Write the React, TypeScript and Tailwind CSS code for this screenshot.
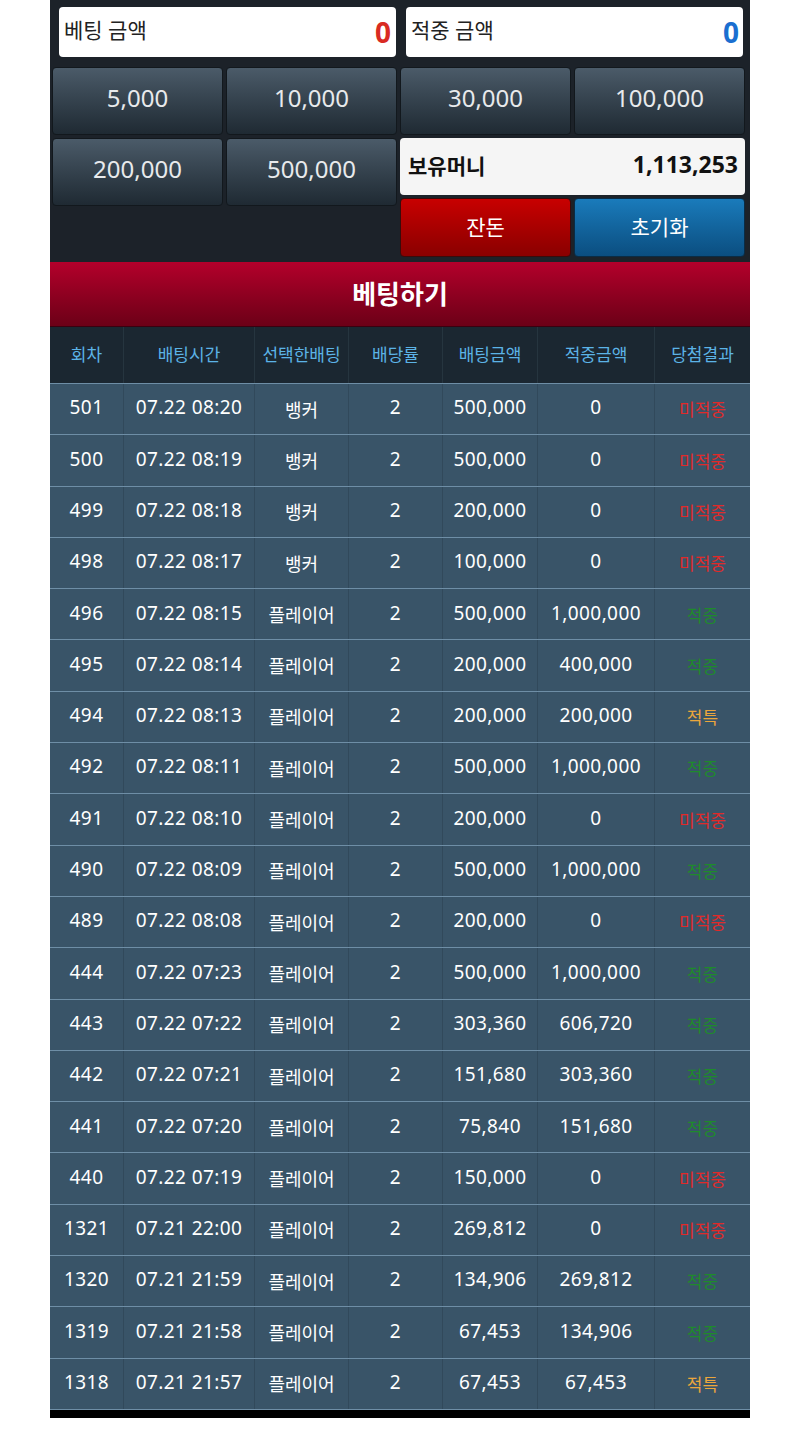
import React from 'react';

type Result = '미적중' | '적중' | '적특';

type Bet = {
    round: string;
    time: string;
    pick: string;
    odds: string;
    amount: string;
    win: string;
    result: Result;
};

const bets: Bet[] = [
    { round: '501', time: '07.22 08:20', pick: '뱅커', odds: '2', amount: '500,000', win: '0', result: '미적중' },
    { round: '500', time: '07.22 08:19', pick: '뱅커', odds: '2', amount: '500,000', win: '0', result: '미적중' },
    { round: '499', time: '07.22 08:18', pick: '뱅커', odds: '2', amount: '200,000', win: '0', result: '미적중' },
    { round: '498', time: '07.22 08:17', pick: '뱅커', odds: '2', amount: '100,000', win: '0', result: '미적중' },
    { round: '496', time: '07.22 08:15', pick: '플레이어', odds: '2', amount: '500,000', win: '1,000,000', result: '적중' },
    { round: '495', time: '07.22 08:14', pick: '플레이어', odds: '2', amount: '200,000', win: '400,000', result: '적중' },
    { round: '494', time: '07.22 08:13', pick: '플레이어', odds: '2', amount: '200,000', win: '200,000', result: '적특' },
    { round: '492', time: '07.22 08:11', pick: '플레이어', odds: '2', amount: '500,000', win: '1,000,000', result: '적중' },
    { round: '491', time: '07.22 08:10', pick: '플레이어', odds: '2', amount: '200,000', win: '0', result: '미적중' },
    { round: '490', time: '07.22 08:09', pick: '플레이어', odds: '2', amount: '500,000', win: '1,000,000', result: '적중' },
    { round: '489', time: '07.22 08:08', pick: '플레이어', odds: '2', amount: '200,000', win: '0', result: '미적중' },
    { round: '444', time: '07.22 07:23', pick: '플레이어', odds: '2', amount: '500,000', win: '1,000,000', result: '적중' },
    { round: '443', time: '07.22 07:22', pick: '플레이어', odds: '2', amount: '303,360', win: '606,720', result: '적중' },
    { round: '442', time: '07.22 07:21', pick: '플레이어', odds: '2', amount: '151,680', win: '303,360', result: '적중' },
    { round: '441', time: '07.22 07:20', pick: '플레이어', odds: '2', amount: '75,840', win: '151,680', result: '적중' },
    { round: '440', time: '07.22 07:19', pick: '플레이어', odds: '2', amount: '150,000', win: '0', result: '미적중' },
    { round: '1321', time: '07.21 22:00', pick: '플레이어', odds: '2', amount: '269,812', win: '0', result: '미적중' },
    { round: '1320', time: '07.21 21:59', pick: '플레이어', odds: '2', amount: '134,906', win: '269,812', result: '적중' },
    { round: '1319', time: '07.21 21:58', pick: '플레이어', odds: '2', amount: '67,453', win: '134,906', result: '적중' },
    { round: '1318', time: '07.21 21:57', pick: '플레이어', odds: '2', amount: '67,453', win: '67,453', result: '적특' },
];

const resultColor: Record<Result, string> = {
    미적중: 'text-[#e02a2a]',
    적중: 'text-[#1f8a2c]',
    적특: 'text-[#eba63c]',
};

const headers = ['회차', '배팅시간', '선택한배팅', '배당률', '배팅금액', '적중금액', '당첨결과'];

const cols = 'grid grid-cols-[74px_131px_94px_94px_95px_117px_1fr]';

function ChipButton({ label }: { label: string }) {
    return (
        <button className="h-[68px] rounded-[4px] border border-[#12181d] bg-gradient-to-b from-[#4b5b69] to-[#1f2a33] pb-[7px] text-[24px] text-[#e8eaec]">
            {label}
        </button>
    );
}

export default function App() {
    return (
        <div className="min-h-[1435px] bg-white font-['Noto_Sans','Noto_Sans_CJK_KR',sans-serif]">
            <div className="mx-auto w-[700px]">
                {/* 상단 금액 패널 */}
                <div className="bg-[#1c2229] pt-[7px] pb-[5px]">
                    <div className="grid grid-cols-2 gap-[10px] pl-[9px] pr-[7px]">
                        <div className="flex h-[50px] items-center justify-between rounded-[4px] bg-white pl-[5px] pr-[5px]">
                            <span className="pb-[2px] text-[21px] text-[#222]">베팅 금액</span>
                            <span className="text-[28px] font-bold text-[#d92b22]">0</span>
                        </div>
                        <div className="flex h-[50px] items-center justify-between rounded-[4px] bg-white pl-[5px] pr-[4px]">
                            <span className="pb-[2px] text-[21px] text-[#222]">적중 금액</span>
                            <span className="text-[28px] font-bold text-[#1a6fd0]">0</span>
                        </div>
                    </div>

                    <div className="mt-[10px] grid grid-cols-4 gap-[3px] pl-[2px] pr-[5px]">
                        <ChipButton label="5,000" />
                        <ChipButton label="10,000" />
                        <ChipButton label="30,000" />
                        <ChipButton label="100,000" />
                        <ChipButton label="200,000" />
                        <ChipButton label="500,000" />
                        <div className="col-span-2 flex flex-col gap-[3px]">
                            <div className="flex h-[57px] items-center justify-between rounded-[4px] bg-[#f5f5f5] pl-[8px] pr-[7px]">
                                <span className="pt-[1px] text-[21px] font-bold text-[#111]">보유머니</span>
                                <span className="pb-[5px] text-[23px] font-bold text-[#111]">1,113,253</span>
                            </div>
                            <div className="grid grid-cols-2 gap-[3px]">
                                <button className="h-[59px] rounded-[4px] border border-[#3a0b0b] bg-gradient-to-b from-[#c80000] to-[#8a0000] text-[21px] text-white">
                                    잔돈
                                </button>
                                <button className="h-[59px] rounded-[4px] border border-[#0a2c45] bg-gradient-to-b from-[#1a7bbb] to-[#0b4e80] text-[21px] text-white">
                                    초기화
                                </button>
                            </div>
                        </div>
                    </div>
                </div>

                {/* 베팅 버튼 */}
                <button className="flex h-[65px] w-full items-center justify-center border-b border-[#3a0010] bg-gradient-to-b from-[#b4002b] to-[#6c0017] text-[26px] font-bold text-white">
                    베팅하기
                </button>

                {/* 베팅 내역 */}
                <div className={`${cols} h-[56px] bg-[#1b2731]`}>
                    {headers.map((h, i) => (
                        <div
                            key={h}
                            className={`flex items-center justify-center text-[17px] text-[#5cb3e6] ${i < headers.length - 1 ? 'border-r border-[#26353f]' : ''}`}
                        >
                            {h}
                        </div>
                    ))}
                </div>

                <div className="bg-[#395468]">
                    {bets.map((b) => (
                        <div
                            key={b.round}
                            className={`${cols} h-[51.3px] border-t border-[#6e8ea6] text-[19px] tracking-[0.4px] text-white`}
                        >
                            <div className="flex items-center justify-center border-r border-[#31495b] pb-[3px]">{b.round}</div>
                            <div className="flex items-center justify-center border-r border-[#31495b] pb-[3px]">{b.time}</div>
                            <div className="flex items-center justify-center border-r border-[#31495b] pt-[2px] text-[18px] tracking-normal">
                                {b.pick}
                            </div>
                            <div className="flex items-center justify-center border-r border-[#31495b] pb-[3px]">{b.odds}</div>
                            <div className="flex items-center justify-center border-r border-[#31495b] pb-[3px]">{b.amount}</div>
                            <div className="flex items-center justify-center border-r border-[#31495b] pb-[3px]">{b.win}</div>
                            <div className={`flex items-center justify-center pt-[2px] text-[17px] tracking-normal ${resultColor[b.result]}`}>
                                {b.result}
                            </div>
                        </div>
                    ))}
                </div>
                <div className="h-[9px] border-t border-[#6e8ea6] bg-black" />
            </div>
        </div>
    );
}
